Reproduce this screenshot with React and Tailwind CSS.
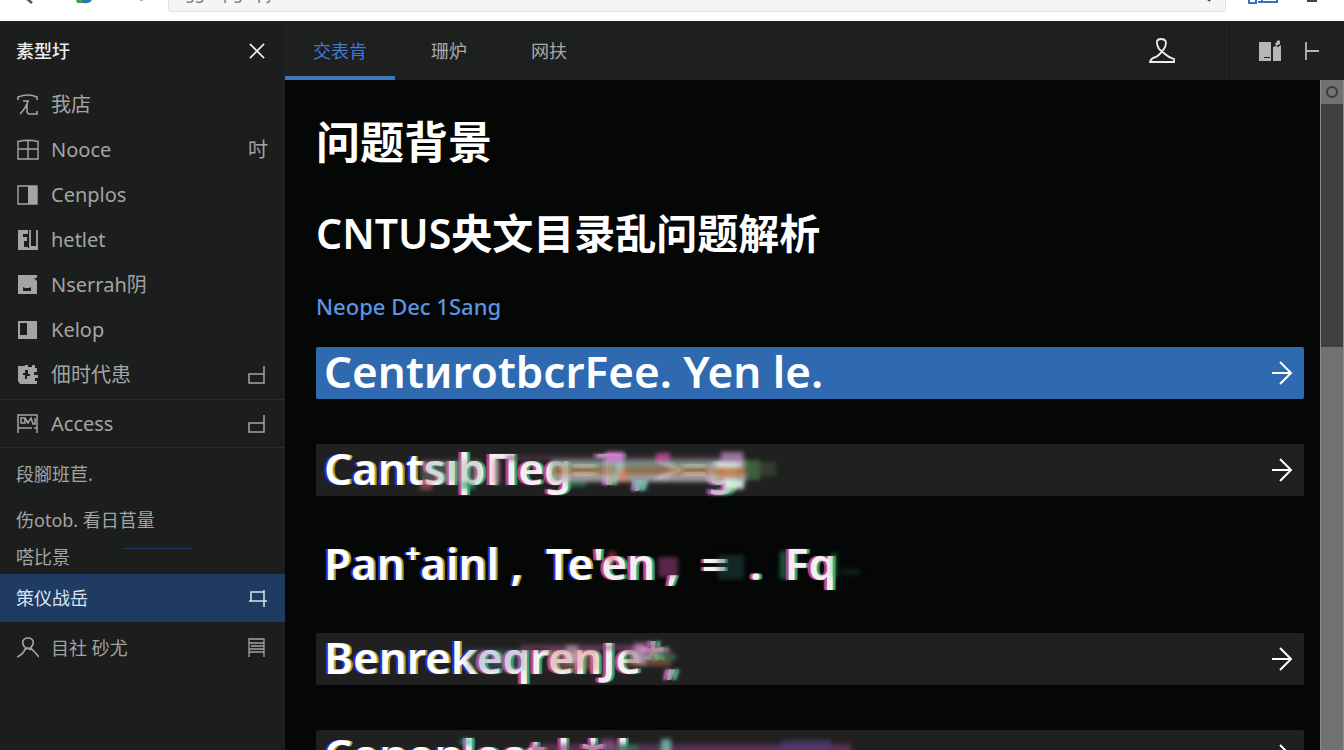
import React, { useState } from 'react';

const navItems = [
  { icon: 'home', label: '我店' },
  { icon: 'grid', label: 'Nooce', tail: '吋' },
  { icon: 'half', label: 'Cenplos' },
  { icon: 'blocks', label: 'hetlet' },
  { icon: 'disk', label: 'Nserrah阴' },
  { icon: 'halfBold', label: 'Kelop' },
  { icon: 'gear', label: '佃时代患', tailIcon: 'corner' },
];

const tabs = ['交表肯', '珊炉', '网扶'];

const icons = {
  home: (
    <g fill="none" stroke="currentColor" strokeWidth="1.6">
      <path d="M1 6V3Q11 -1 20 3V6M6 7h6M11 7Q9 14 3 20M10 10v7q0 3 3 3h7v-3" />
    </g>
  ),
  grid: (
    <g fill="none" stroke="currentColor" strokeWidth="1.4">
      <path d="M1 2.500Q11 0 21 2.500V20H1zM1 10h20M11 1v19" />
    </g>
  ),
  half: (
    <g>
      <path d="M1 2h19v18H1z" fill="none" stroke="currentColor" strokeWidth="1.4" />
      <path d="M11 2h9v18h-9z" fill="currentColor" />
    </g>
  ),
  blocks: (
    <g>
      <path d="M1 1h10v4H6v3h4v4H7v6h4v2H1z" fill="currentColor" />
      <path d="M13 1v17h7V1M1 20h20" fill="none" stroke="currentColor" strokeWidth="1.8" />
    </g>
  ),
  disk: (
    <path
      d="M1 1h19v3h-3l3 3v13H1zM6 13v4h8v-4l-2 1H8z"
      fill="currentColor"
      fillRule="evenodd"
    />
  ),
  halfBold: (
    <path d="M1 2h19v18H1zM3 4v12h7V4z" fill="currentColor" fillRule="evenodd" />
  ),
  gear: (
    <path
      d="M1 2h7V1h3v2h4V1h3v3h2v4h-3v3h4v3h-3v3h2v3H3l-2-3zM8 6v3H6v2h2v4h2v-3h3v-2h-2V6z"
      fill="currentColor"
      fillRule="evenodd"
    />
  ),
  image: (
    <g fill="none" stroke="currentColor" strokeWidth="1.5">
      <path d="M1 20V2h19v18M1 15h14M4 5h4v5H4zM8 5l3 5 3-5 2 6h2V5M17 15h3" />
    </g>
  ),
  person: (
    <g fill="none" stroke="currentColor" strokeWidth="1.6">
      <path d="M8 10Q5 8 6 4q1-3 5-3t5 3q1 4-2 6M9 10Q7 17 0 20M13 10l9 10M7 13l4-2 3 2" />
    </g>
  ),
  corner: (
    <path d="M18 2v17H3v-9h15" fill="none" stroke="currentColor" strokeWidth="1.5" />
  ),
  flag: (
    <path d="M17 3v17M17 5H4v9h16M2 14h4" fill="none" stroke="currentColor" strokeWidth="1.5" />
  ),
  sheet: (
    <path d="M3 20V2h15v18M3 6h15M5 9h13M3 12h15M3 15h15" fill="none" stroke="currentColor" strokeWidth="1.3" />
  ),
};

function Icon({ name }) {
  return (
    <svg viewBox="0 0 22 22" className="h-[22px] w-[22px] shrink-0" aria-hidden="true">
      {icons[name]}
    </svg>
  );
}

// Colour bands that run across the broken part of a title
function Smear({ bands }) {
  return (
    <svg viewBox="0 0 560 52" className="absolute top-0 left-0 h-[52px] w-[560px] blur-[2px]" aria-hidden="true">
      {bands.map(([x, y, w, h, fill, opacity], i) => (
        <rect key={i} x={x} y={y} width={w} height={h} fill={fill} opacity={opacity} />
      ))}
    </svg>
  );
}

const rows = [
  {
    kind: 'active',
    parts: [['CentиrotbcrFee. Yen le.', 'clean']],
  },
  {
    kind: 'card',
    parts: [['Cant', 'fringe'], ['sıþΠeg', 'broken'], ['=T , >=g', 'faint']],
    bands: [
      [190, 12, 240, 4, '#5c3a58', 0.7],
      [105, 16, 60, 22, '#8fae9c', 0.35],
      [235, 16, 195, 8, '#8fae9c', 0.75],
      [235, 23, 195, 8, '#b08258', 0.75],
      [235, 30, 195, 8, '#b9b4b2', 0.8],
      [430, 16, 14, 20, '#4d7a50', 0.7],
      [444, 18, 16, 14, '#3c4a38', 0.7],
      [177, 16, 7, 24, '#e07aa0', 0.6],
      [290, 8, 18, 10, '#d878d0', 0.9],
      [300, 18, 8, 20, '#a8ccc8', 0.8],
      [303, 26, 8, 12, '#e07850', 0.7],
      [340, 9, 14, 9, '#c850a0', 0.8],
      [405, 8, 22, 10, '#b088b8', 0.8],
      [400, 18, 26, 6, '#f0f4f0', 0.7],
      [400, 26, 28, 6, '#d87838', 0.7],
      [408, 36, 20, 9, '#dcf4e4', 0.9],
      [104, 38, 12, 8, '#e06888', 0.5],
      [145, 38, 14, 7, '#35a06c', 0.7],
      [252, 38, 18, 5, '#2f8d64', 0.6],
      [317, 36, 14, 9, '#75b7b6', 0.8],
    ],
  },
  {
    kind: 'plain',
    parts: [['Pan⁺ainl ,  Te', 'fringe'], ["'en ,  =  .  Fq", 'broken']],
    bands: [
      [292, 10, 8, 12, '#e04060', 0.5],
      [342, 16, 20, 20, '#d85ab0', 0.4],
      [402, 14, 26, 24, '#2b5a5c', 0.4],
      [464, 10, 6, 28, '#38b070', 0.5],
      [515, 12, 6, 24, '#38b070', 0.4],
      [524, 28, 20, 6, '#16321f', 0.6],
    ],
  },
  {
    kind: 'card',
    parts: [['Benrek', 'fringe'], ['eqrenJe', 'broken'], ['*,', 'faint']],
    bands: [
      [150, 16, 60, 22, '#5f8aa8', 0.3],
      [205, 12, 130, 5, '#8a4a78', 0.6],
      [232, 17, 50, 20, '#d08a78', 0.4],
      [310, 15, 45, 6, '#a0587a', 0.6],
      [310, 21, 50, 6, '#4e8a5c', 0.6],
      [310, 27, 45, 6, '#9a6a40', 0.6],
      [318, 10, 12, 22, '#dc9ed6', 0.6],
      [250, 12, 12, 18, '#d8c0d8', 0.5],
    ],
  },
  {
    kind: 'card',
    parts: [['Conon', 'fringe'], ['leot l * l', 'broken']],
    bands: [
      [145, 9, 12, 6, '#41b6a5', 0.7],
      [215, 14, 320, 12, '#7a3a72', 0.6],
      [285, 9, 14, 12, '#a05a98', 0.6],
      [300, 14, 22, 12, '#2a7a58', 0.7],
      [345, 9, 10, 16, '#7ad8c8', 0.7],
      [465, 10, 50, 12, '#54407f', 0.6],
    ],
  },
];

const rowStyles = {
  active: 'h-[52px] bg-[#2f6ab0]',
  card: 'h-[52px] bg-[#202020]',
  plain: 'h-[47px]',
};

const partStyles = {
  clean: 'text-white',
  fringe: 'text-white [text-shadow:-2px_0_0_#2430d8,2px_0_0_#a8a03a]',
  broken: 'text-white/90 [text-shadow:-3px_0_1px_#c04890,3px_0_1px_#3aa878]',
  faint: 'text-white/50 [text-shadow:-4px_0_3px_#c06ab8,5px_0_3px_#4fb088]',
};

function TopicRow({ row }) {
  return (
    <button
      type="button"
      className={`relative flex w-full items-center justify-between rounded-xs px-2 text-left ${rowStyles[row.kind]}`}
    >
      <span className="pb-1 text-[44px] leading-[52px] font-semibold whitespace-pre">
        {row.parts.map(([text, style], i) => (
          <span key={i} className={partStyles[style]}>{text}</span>
        ))}
      </span>
      {row.bands && <Smear bands={row.bands} />}
      {row.kind !== 'plain' && (
        <svg viewBox="0 0 24 24" className="mr-0.5 h-6 w-6 shrink-0 text-white" fill="none" stroke="currentColor" strokeWidth="2" aria-hidden="true">
          <path d="M2 12h19M10 1l11 11-11 11" />
        </svg>
      )}
    </button>
  );
}

function BrowserBar() {
  return (
    <div className="flex h-[21px] shrink-0 items-start overflow-hidden bg-white">
      <svg viewBox="0 0 168 12" className="h-3 w-[168px] shrink-0" aria-hidden="true">
        <path d="M26 -2l6 5" stroke="#555" strokeWidth="2.500" />
        <path d="M76 0h7l1 3h-7z" fill="#4c9a4a" />
        <path d="M82 0h10q-3 4-9 3z" fill="#2a78a8" />
        <path d="M140 0h3" stroke="#aaa" strokeWidth="2" />
      </svg>
      <div className="flex h-3 flex-1 items-end rounded-b border border-t-0 border-[#e2e2e2] bg-[#f5f5f5]">
        <input
          aria-label="Address"
          defaultValue="gg : q/g. q/j"
          className="h-9 w-full bg-transparent px-4 text-base text-[#777] outline-none"
        />
        <svg viewBox="0 0 24 12" className="h-3 w-6 shrink-0" aria-hidden="true">
          <path d="M4 -2l5 4" stroke="#444" strokeWidth="2" />
        </svg>
      </div>
      <svg viewBox="0 0 118 12" className="h-3 w-[118px] shrink-0" aria-hidden="true">
        <path d="M23 0v3h7V0M32 2h19V0M36 0v2" fill="none" stroke="#3a6fc0" strokeWidth="2" />
        <path d="M81 1h10" stroke="#444" strokeWidth="2" />
      </svg>
    </div>
  );
}

function Sidebar() {
  return (
    <aside className="flex w-[285px] shrink-0 flex-col bg-[#1c1e1d] text-lg text-[#a3a5a4]">
      <div className="flex h-[59px] items-center justify-between px-4 text-[#ececec]">
        <h2 className="font-medium">素型圩</h2>
        <button type="button" aria-label="Close" className="p-1">
          <svg viewBox="0 0 18 18" className="h-4 w-4" stroke="currentColor" strokeWidth="1.800" aria-hidden="true">
            <path d="M1 1l16 16M17 1L1 17" />
          </svg>
        </button>
      </div>

      <nav className="flex flex-col pt-0.5">
        {navItems.map((item) => (
          <a key={item.label} href="#" className="flex h-[45px] items-center gap-3 px-[17px]">
            <Icon name={item.icon} />
            <span className="flex-1 text-xl">{item.label}</span>
            {item.tail && <span className="text-xl">{item.tail}</span>}
            {item.tailIcon && <Icon name={item.tailIcon} />}
          </a>
        ))}
        <a href="#" className="mt-0.5 flex h-[49px] items-center gap-3 border-y border-[#2b2d2c] px-[17px]">
          <Icon name="image" />
          <span className="flex-1 text-xl">Access</span>
          <Icon name="corner" />
        </a>
      </nav>

      <div className="flex flex-col">
        <a href="#" className="flex h-[52px] items-center px-4">段腳班苣.</a>
        <a href="#" className="flex h-10 items-center px-4">伤otob. 看日苢量</a>
        <a href="#" className="relative flex h-[34px] items-center px-4">
          嗒比景
          <span className="absolute top-2 left-[124px] h-px w-[68px] bg-[#1e3a5c]"></span>
        </a>
        <a href="#" className="flex h-12 items-center justify-between bg-[#1f3b62] px-4 text-[#dbe3ee]">
          策仪战岳
          <Icon name="flag" />
        </a>
        <a href="#" className="flex h-[52px] items-center gap-3 px-[17px]">
          <Icon name="person" />
          <span className="flex-1">目社 砂尤</span>
          <Icon name="sheet" />
        </a>
      </div>
    </aside>
  );
}

function App() {
  const [activeTab, setActiveTab] = useState(0);

  return (
    <div className="flex h-screen flex-col overflow-hidden bg-[#050606] font-['Noto_Sans','Noto_Sans_CJK_SC',sans-serif]">
      <BrowserBar />

      <div className="flex min-h-0 flex-1">
        <Sidebar />

        <div className="flex min-w-0 flex-1 flex-col">
          {/* Tab bar */}
          <header className="flex h-[59px] shrink-0 items-stretch bg-[#1e1f1f] text-lg text-[#a9abaa]">
            <div className="flex flex-1 gap-2">
              {tabs.map((tab, i) => (
                <button
                  key={tab}
                  type="button"
                  onClick={() => setActiveTab(i)}
                  className={`border-b-4 px-7 pt-1 ${
                    activeTab === i ? 'border-[#3f76bb] text-[#3d7bd6]' : 'border-transparent'
                  }`}
                >
                  {tab}
                </button>
              ))}
            </div>
            <button type="button" aria-label="Account" className="px-[54px] text-[#ededed]">
              <svg viewBox="0 0 26 26" className="h-[26px] w-[26px]" fill="none" stroke="currentColor" strokeWidth="1.800" aria-hidden="true">
                <path d="M10 11Q5 1 12 1t4 8Q13 15 7 19q-5 1-6 5h24v-3q-6-2-9-5l-6-5" />
              </svg>
            </button>
            <div className="flex items-center gap-5 border-l border-[#171818] pr-6 pl-7 text-[#b5b6b6]">
              <button type="button" aria-label="Library">
                <svg viewBox="0 0 26 24" className="h-6 w-[26px]" fill="currentColor" aria-hidden="true">
                  <path d="M1 3h12v19H1zM6 18v1h6v-1z" fillRule="evenodd" />
                  <path d="M15 8l3-1 2 1 3-2v16h-8zM17 5l3-4 2 1v3l-4 2z" />
                </svg>
              </button>
              <button type="button" aria-label="Collapse">
                <svg viewBox="0 0 16 20" className="h-5 w-4" fill="none" stroke="currentColor" strokeWidth="1.800" aria-hidden="true">
                  <path d="M2 1v18M2 10h13" />
                </svg>
              </button>
            </div>
          </header>

          <div className="flex min-h-0 flex-1">
            <main className="min-w-0 flex-1 overflow-hidden pt-8 pr-4 pl-[31px]">
              <h1 className="text-[44px] leading-[60px] font-bold text-white">问题背景</h1>
              <h2 className="mt-8 text-[41px] leading-[58px] font-semibold text-white">CNTUS央文目录乱问题解析</h2>
              <a href="#" className="mt-7 block text-[22px] leading-8 font-medium text-[#5b94e0]">Neope Dec 1Sang</a>
              <div className="mt-[25px] flex flex-col gap-[45px]">
                {rows.map((row, i) => (
                  <TopicRow key={i} row={row} />
                ))}
              </div>
            </main>

            {/* Scrollbar */}
            <div className="flex w-6 flex-col border-x border-[#8c8c8c] bg-[#727272]">
              <div className="flex h-6 items-center justify-center">
                <span className="h-3 w-3 rounded-full border-2 border-[#3a3a3a]"></span>
              </div>
              <div className="h-[243px] bg-[#3f3f3f]"></div>
            </div>
          </div>
        </div>
      </div>
    </div>
  );
}

export default App;
